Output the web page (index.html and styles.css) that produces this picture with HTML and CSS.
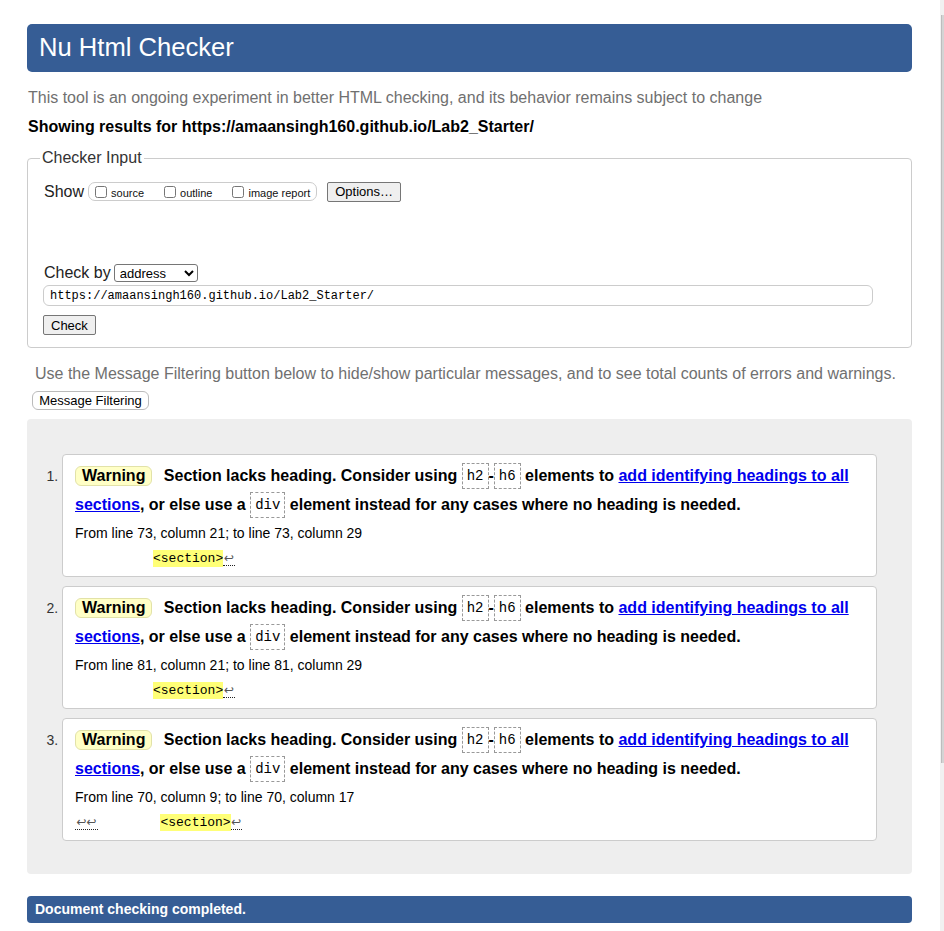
FILE: index.html
```html
<!DOCTYPE html>
<html lang="en">
<head>
<meta charset="utf-8">
<title>Nu Html Checker</title>
<link rel="stylesheet" href="styles.css">
</head>
<body>
<div class="page">
  <h1 class="title">Nu Html Checker</h1>
  <p class="intro">This tool is an ongoing experiment in better HTML checking, and its behavior remains subject to change</p>
  <p class="showing">Showing results for https://amaansingh160.github.io/Lab2_Starter/</p>
  <form class="checker">
    <fieldset class="checker-input">
      <legend>Checker Input</legend>
      <div class="show-row">
        <span class="row-label">Show</span>
        <span class="opts">
          <label class="opt"><input type="checkbox"><span>source</span></label>
          <label class="opt"><input type="checkbox"><span>outline</span></label>
          <label class="opt"><input type="checkbox"><span>image report</span></label>
        </span>
        <button type="button" class="btn opts-btn">Options…</button>
      </div>
      <div class="by-row">
        <span class="row-label">Check by</span>
        <select class="by-select"><option>address</option></select>
      </div>
      <input class="url" type="text" value="https://amaansingh160.github.io/Lab2_Starter/">
      <button type="button" class="btn check-btn">Check</button>
    </fieldset>
  </form>
  <p class="filter-note">Use the Message Filtering button below to hide/show particular messages, and to see total counts of errors and warnings.</p>
  <button type="button" class="filter-btn">Message Filtering</button>
  <div class="results">
    <ol class="messages">
      <li class="msg">
        <p class="msg-text"><span class="badge">Warning</span> <span>Section lacks heading. Consider using <code class="tag">h2</code>-<code class="tag">h6</code> elements to <a href="#">add identifying headings to all sections</a>, or else use a <code class="tag">div</code> element instead for any cases where no heading is needed.</span></p>
        <p class="loc">From line 73, column 21; to line 73, column 29</p>
        <p class="extract">          <mark>&lt;section&gt;</mark><span class="lf">↩</span></p>
      </li>
      <li class="msg">
        <p class="msg-text"><span class="badge">Warning</span> <span>Section lacks heading. Consider using <code class="tag">h2</code>-<code class="tag">h6</code> elements to <a href="#">add identifying headings to all sections</a>, or else use a <code class="tag">div</code> element instead for any cases where no heading is needed.</span></p>
        <p class="loc">From line 81, column 21; to line 81, column 29</p>
        <p class="extract">          <mark>&lt;section&gt;</mark><span class="lf">↩</span></p>
      </li>
      <li class="msg">
        <p class="msg-text"><span class="badge">Warning</span> <span>Section lacks heading. Consider using <code class="tag">h2</code>-<code class="tag">h6</code> elements to <a href="#">add identifying headings to all sections</a>, or else use a <code class="tag">div</code> element instead for any cases where no heading is needed.</span></p>
        <p class="loc">From line 70, column 9; to line 70, column 17</p>
        <p class="extract"><span class="lf lf2">↩↩</span>        <mark>&lt;section&gt;</mark><span class="lf">↩</span></p>
      </li>
    </ol>
  </div>
  <p class="done">Document checking completed.</p>
</div>
<div class="scrollbar"><div class="thumb"></div></div>
</body>
</html>
```
FILE: styles.css
```css
* { box-sizing: border-box; }
html, body { margin: 0; padding: 0; }
html { overflow: hidden; }
body {
  font-family: "Liberation Sans", Arial, sans-serif;
  font-size: 16px;
  color: #000;
  background: #fff;
}
.page {
  width: 885px;
  margin-left: 27px;
  padding-top: 24px;
  padding-bottom: 8px;
}
.title {
  margin: 0;
  height: 48px;
  line-height: 47px;
  padding-left: 12px;
  background: #365d95;
  color: #fff;
  font-size: 25.6px;
  font-weight: normal;
  border-radius: 5px;
}
.intro {
  margin: 16px 0 0 1px;
  line-height: 20px;
  color: #707070;
}
.showing {
  margin: 9.4px 0 0 1px;
  line-height: 20px;
  font-weight: bold;
}
.checker { margin: 12px 0 0; }
.checker-input {
  margin: 0;
  min-width: 0;
  padding: 14px 12px 12px;
  border: 1px solid #ccc;
  border-radius: 4px;
}
.checker-input legend {
  padding: 0 2px;
  line-height: 18px;
  font-size: 16px;
  color: #333;
}
.show-row {
  display: flex;
  align-items: center;
  height: 21px;
  margin-left: 4px;
}
.row-label {
  font-size: 16px;
  color: #222;
  margin-right: 4px;
}
.opts {
  display: inline-flex;
  align-items: center;
  height: 19px;
  border: 1px solid #ccc;
  border-radius: 7px;
  padding: 0 6px;
}
.opt {
  display: inline-flex;
  align-items: center;
  font-size: 11px;
  color: #111;
  margin-right: 20px;
}
.opt:last-child { margin-right: 0; }
.opt span { position: relative; top: 1px; }
.opt input {
  width: 12px;
  height: 12px;
  margin: 0 4px 0 0;
}
.btn {
  font: 13px "Liberation Sans", Arial, sans-serif;
  height: 20px;
  padding: 0 7px;
  border: 1px solid #767676;
  border-radius: 2px;
  background: #efefef;
  color: #000;
}
.opts-btn { margin-left: 10px; }
.by-row {
  display: flex;
  align-items: center;
  height: 18px;
  margin: 62px 0 0 4px;
}
.by-row .row-label { margin-right: 3px; }
.by-select {
  width: 84px;
  height: 18px;
  font: 13px "Liberation Sans", Arial, sans-serif;
  padding: 0 0 0 1px;
  border: 1px solid #767676;
  border-radius: 3px;
  background: #fff;
  color: #000;
}
.url {
  display: block;
  margin: 3px 0 0 3px;
  width: 830px;
  height: 21px;
  border: 1px solid #ccc;
  border-radius: 6px;
  padding: 1px 6px 0;
  font: 12px "Liberation Mono", monospace;
  color: #000;
  background: #fff;
}
.check-btn {
  display: block;
  margin: 9px 0 0 3px;
}
.filter-note {
  margin: 16px 0 0 8px;
  line-height: 20px;
  color: #707070;
}
.filter-btn {
  display: block;
  margin: 6.3px 0 0 4.7px;
  height: 19px;
  padding: 0 6.5px;
  font: 13px "Liberation Sans", Arial, sans-serif;
  color: #000;
  background: #fff;
  border: 1px solid #bbb;
  border-radius: 6px;
}
.results {
  margin-top: 9px;
  background: #eee;
  border-radius: 4px;
  padding: 35.7px 35px 33.4px;
}
.messages {
  margin: 0;
  padding: 0;
  list-style: decimal outside;
}
.msg {
  background: #fff;
  border: 1px solid #ccc;
  border-radius: 4px;
  padding: 7px 12px 7px;
  font-size: 14px;
  color: #333;
}
.msg + .msg { margin-top: 9.4px; }
.msg-text {
  margin: 0;
  line-height: 28.8px;
  font-size: 16px;
  font-weight: bold;
  color: #000;
}
.badge {
  display: inline-block;
  padding: 0 6px;
  line-height: 18px;
  border: 1px solid #e2e2a8;
  background: #ffffc6;
  border-radius: 6px;
  margin-right: 7px;
}
.tag {
  font: 14px "Liberation Mono", monospace;
  font-weight: normal;
  line-height: 16px;
  border: 1px dashed #999;
  padding: 4px 4px;
  vertical-align: 1px;
}
.msg-text a {
  color: #00e;
  text-decoration: underline;
}
.loc {
  margin: 4px 0 0;
  line-height: 18px;
  font-size: 14px;
  color: #000;
}
.extract {
  margin: 7px 0 0;
  font: 13px/20px "Liberation Mono", monospace;
  white-space: pre;
  color: #000;
}
.extract mark {
  background: #ffff77;
  color: #000;
  padding: 1px 0;
}
.lf {
  display: inline-block;
  width: 11.5px;
  font: 12px/13px "DejaVu Sans", sans-serif;
  color: #555;
  border-bottom: 1px dotted #222;
  text-align: center;
}
.lf2 { width: 23px; }
.done {
  margin: 21.3px 0 0;
  height: 27px;
  line-height: 27px;
  padding-left: 8px;
  background: #365d95;
  color: #fff;
  font-size: 14px;
  font-weight: bold;
  border-radius: 4px;
}
.scrollbar {
  position: fixed;
  top: 0;
  right: 0;
  width: 4px;
  height: 100%;
  background: #f1f1f1;
}
.thumb {
  margin: 15px 0 0 1px;
  width: 3px;
  height: 748px;
  background: #d4d4d4;
  border-left: 1px solid #bdbdbd;
}
```
